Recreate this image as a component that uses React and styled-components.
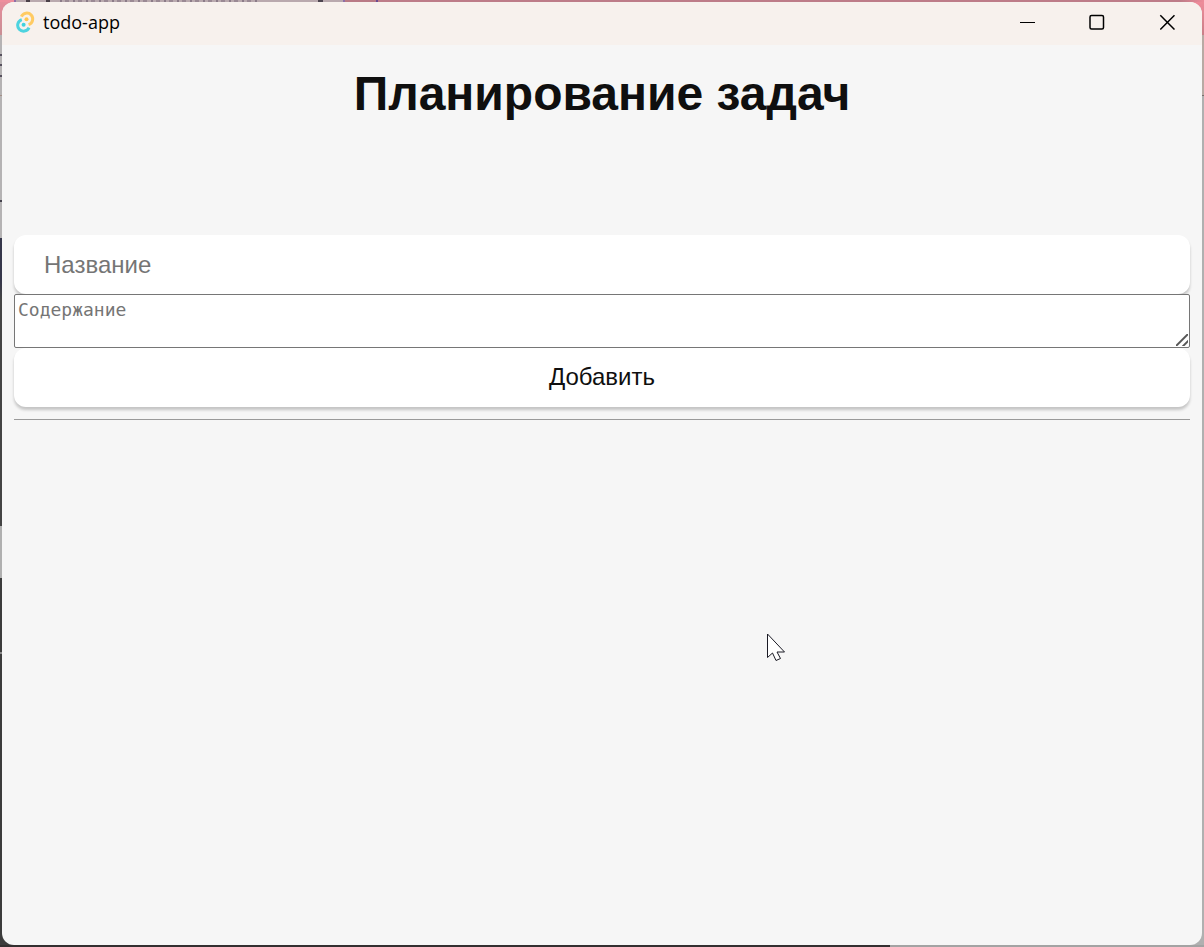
import React, { useState } from "react";
import styled, { createGlobalStyle } from "styled-components";

const GlobalStyle = createGlobalStyle`
  *, *::before, *::after { box-sizing: border-box; }
  body {
    margin: 0;
    color: #0f0f0f;
    font-family: "Liberation Sans", Arial, sans-serif;
  }
`;

const Desktop = styled.div`
  display: flex;
  min-height: 100vh;
  padding: 2px;
  background:
    repeating-linear-gradient(90deg, #8b7b88 0 2px, transparent 2px 5px, #9a8994 5px 9px, transparent 9px 13px) 60px 0 / 200px 2px no-repeat,
    linear-gradient(90deg, #ee8f9d 0 14px, #8d6fa8 14px 16px, #b9a9ae 16px 26px, #4a4049 26px 30px, #b9a9ae 30px 46px, #4a4049 46px 50px, #b9a9ae 50px 318px, #4c4450 318px 323px, #b9a9ae 323px 343px, #8d6fa8 343px 345px, #b97a86 345px 376px, #6a4a92 376px 378px, #bd7c88 378px 1180px, #ee8b9a) top / 100% 2px no-repeat,
    linear-gradient(90deg, #332f30 0 890px, #a3a3a3 890px) bottom / 100% 2px no-repeat,
    linear-gradient(#e88e9c 0, #c98e94 35px, #b5b3b4 35px 54px, #55505e 54px 56px, #b5b3b4 56px 64px, #55505e 64px 66px, #b5b3b4 66px 75px, #55505e 75px 77px, #b5b3b4 77px 95px, #a38f88 95px 96px, #b5b3b4 96px 200px, #44414c 200px 202px, #b5b3b4 202px 238px, #35364a 238px 280px, #444 300px 526px, #b0b0b0 526px 578px, #3c3c3c 578px 652px, #8a8a8a 652px 654px, #3c3c3c 654px) left / 50% 100% no-repeat,
    linear-gradient(#f08c9b 0, #c97f88 35px, #b8aaa4 35px 95px, #77706d 95px 96px, #b0b0b0 96px) right / 50% 100% no-repeat;
`;

const Window = styled.div`
  display: flex;
  flex: 1;
  flex-direction: column;
  overflow: hidden;
  border-radius: 12px;
  background: #f6f6f6;
`;

const TitleBar = styled.header`
  display: flex;
  align-items: center;
  height: 43px;
  padding: 0 0 3px 13px;
  background: #f7f1ed;
`;

const AppName = styled.span`
  flex: 1;
  margin-left: 8px;
  color: #000;
  font: 18px/24px "Open Sans", "Noto Sans", sans-serif;
`;

const Caption = styled.button`
  display: grid;
  place-items: center;
  width: 70px;
  height: 40px;
  padding: 0;
  border: 0;
  background: transparent;
  color: #000;
`;

const Content = styled.main`
  padding: 22px 12px;
`;

const Heading = styled.h1`
  margin: 0 0 114px;
  font-size: 48px;
  line-height: 54px;
  text-align: center;
`;

const Form = styled.form`
  display: flex;
  flex-direction: column;
`;

const control = `
  width: 100%;
  height: 59px;
  border: 0;
  border-radius: 12px;
  background: #fff;
  box-shadow: 0 3px 3px rgba(0, 0, 0, 0.2);
  color: #0f0f0f;
  font: 24px/28px "Liberation Sans", Arial, sans-serif;
`;

const TitleInput = styled.input`
  ${control}
  padding: 0 30px;
  &::placeholder { color: #757575; }
`;

const BodyInput = styled.textarea`
  position: relative;
  width: 100%;
  height: 54px;
  padding: 3px;
  border: 1px solid #767676;
  border-radius: 2px;
  background: #fff;
  color: #0f0f0f;
  font: 18px/24px "DejaVu Sans Mono", monospace;
  resize: vertical;
  &::placeholder { color: #757575; }
  &::-webkit-resizer {
    background: linear-gradient(135deg, transparent 0 7px, #555 8px 9px, transparent 10px 12px, #555 13px 14px, transparent 15px) 2px 2px / 12px 12px no-repeat;
  }
`;

const AddButton = styled.button`
  ${control}
  padding: 0 30px 2px;
`;

const Divider = styled.hr`
  margin: 12px 0;
  border: 0;
  border-top: 1px solid #9a9a9a;
`;

const Pointer = styled.svg`
  position: absolute;
  left: 766px;
  top: 632px;
  pointer-events: none;
`;

function Logo() {
  return (
    <svg width="20" height="22" viewBox="0 0 20 22" fill="none" aria-hidden="true">
      <path d="M6.400 5.600a5.900 5.900 0 1 1 7.200 8" stroke="#ffcb63" strokeWidth="3" />
      <path d="M6.800 8.600a5.900 5.900 0 1 0 7.200 8" stroke="#4dd3df" strokeWidth="3" />
      <circle cx="11.5" cy="8.3" r="2" fill="#ffc64f" />
      <circle cx="8.6" cy="13.8" r="2" fill="#40d2de" />
    </svg>
  );
}

export default function App() {
  const [title, setTitle] = useState("");
  const [body, setBody] = useState("");

  return (
    <Desktop>
      <GlobalStyle />
      <Window>
        <TitleBar>
          <Logo />
          <AppName>todo-app</AppName>
          <Caption type="button" aria-label="Minimize">
            <svg width="16" height="16" stroke="currentColor" aria-hidden="true">
              <path d="M1 8.5h15" />
            </svg>
          </Caption>
          <Caption type="button" aria-label="Maximize">
            <svg width="16" height="16" fill="none" stroke="currentColor" strokeWidth="1.5" aria-hidden="true">
              <rect x="1" y="1.500" width="13.5" height="13.5" rx="1.5" />
            </svg>
          </Caption>
          <Caption type="button" aria-label="Close">
            <svg width="16" height="16" stroke="currentColor" strokeWidth="1.5" aria-hidden="true">
              <path d="M1.300 1.300l14.200 14.200M15.500 1.300L1.300 15.500" />
            </svg>
          </Caption>
        </TitleBar>
        <Content>
          <Heading>Планирование задач</Heading>
          <Form onSubmit={(e) => e.preventDefault()}>
            <TitleInput
              aria-label="Название"
              placeholder="Название"
              value={title}
              onChange={(e) => setTitle(e.target.value)}
            />
            <BodyInput
              aria-label="Содержание"
              placeholder="Содержание"
              rows={2}
              value={body}
              onChange={(e) => setBody(e.target.value)}
            />
            <AddButton type="submit">Добавить</AddButton>
          </Form>
          <Divider />
        </Content>
      </Window>
      <Pointer width="20" height="30" viewBox="0 0 20 30" aria-hidden="true">
        <path d="M1.5 2v23.500l5-4.500 3.500 7.500 4.500-2-3.500-6.500h7.500z" fill="#fff" stroke="#1a1a24" />
      </Pointer>
    </Desktop>
  );
}
